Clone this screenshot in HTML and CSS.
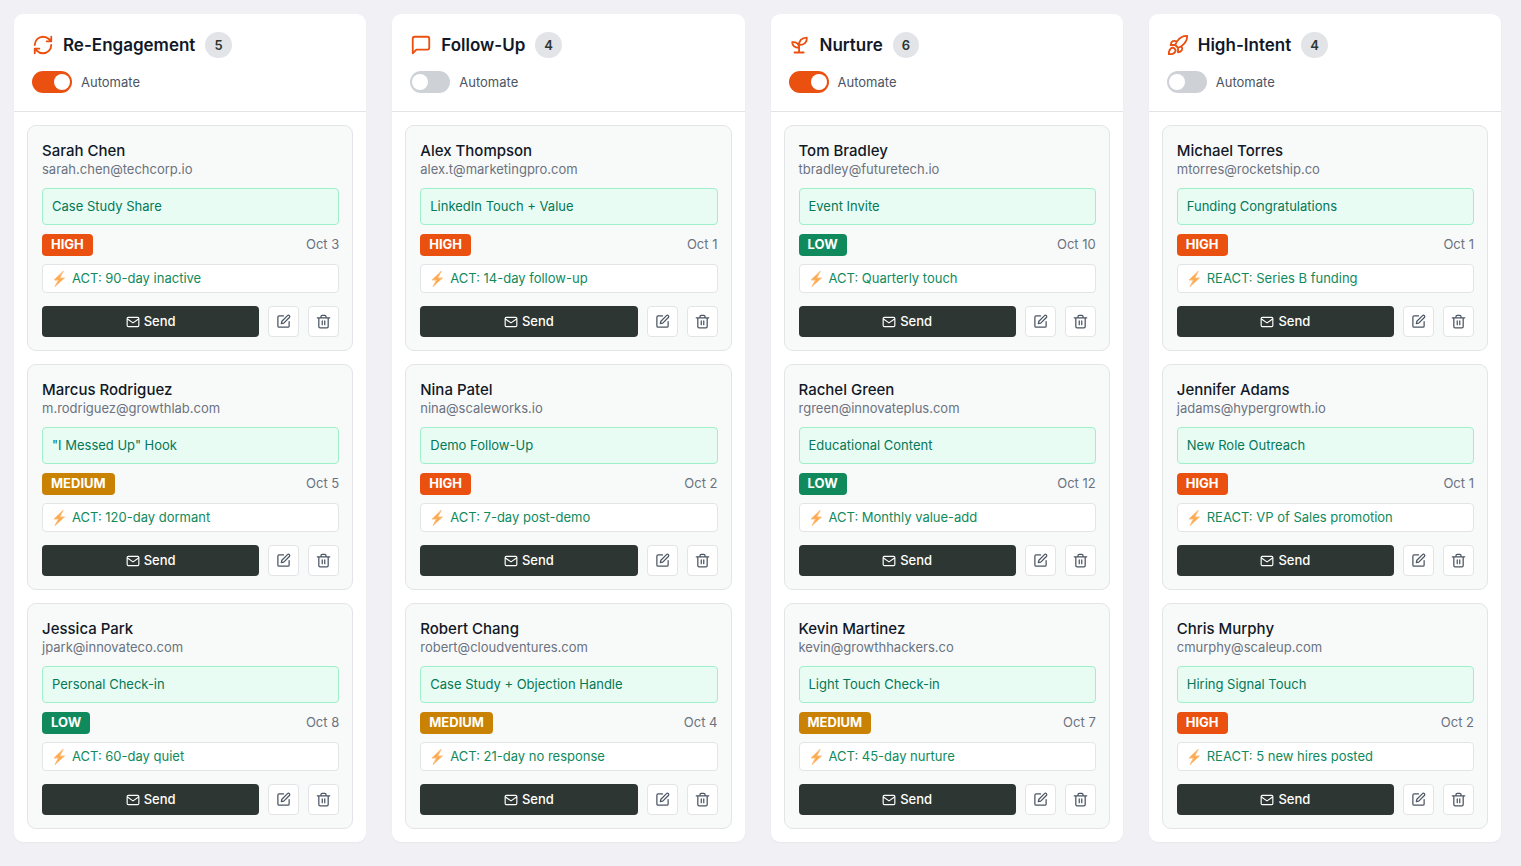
FILE: index.html
```
<!DOCTYPE html>
<html lang="en">
<head>
<meta charset="utf-8">
<meta name="viewport" content="width=device-width, initial-scale=1">
<title>Outreach board</title>
<link rel="stylesheet" href="styles.css">
</head>
<body>
<svg class="sprite" aria-hidden="true">
  <symbol id="i-refresh" viewBox="0 0 24 24"><path d="M3 12a9 9 0 0 1 9-9 9.750 9.750 0 0 1 6.740 2.740L21 8M21 3v5h-5M21 12a9 9 0 0 1-9 9 9.750 9.750 0 0 1-6.740-2.740L3 16M8 16H3v5"/></symbol>
  <symbol id="i-message" viewBox="0 0 24 24"><path d="M21 15a2 2 0 0 1-2 2H7l-4 4V5a2 2 0 0 1 2-2h14a2 2 0 0 1 2 2z"/></symbol>
  <symbol id="i-sprout" viewBox="0 0 24 24"><path d="M6 20.200h10M11 20v-8c0-3 .5-7.600 8.400-8 .5 4.500-2 8-8.400 8M11 15c-4 0-7.300-2-7.500-6 4.300-.5 7.500 1.500 7.500 6"/></symbol>
  <symbol id="i-rocket" viewBox="0 0 24 24"><path d="M2 22c0-3 .5-5 2-6a3 3 0 0 1 4.300 4.300C7.300 21.600 5 22 2 22zM12 15l-3-3a22 22 0 0 1 2-3.950A12.880 12.880 0 0 1 22 2c0 2.720-.780 7.500-6 11a22.350 22.350 0 0 1-4 2zM9 12H4s.550-3.030 2-4c1.620-1.080 5 0 5 0M12 15v5s3.030-.550 4-2c1.080-1.620 0-5 0-5"/></symbol>
  <symbol id="i-bolt" viewBox="0 0 16 16"><path d="M12 .5L3 9h4.500L4 15.500 13.500 7H9z" fill="#fba94c" stroke="#fdbe7c" stroke-width="1"/></symbol>
  <symbol id="i-mail" viewBox="0 0 24 24"><rect x="2" y="4" width="20" height="16" rx="2"/><path d="M2.500 7 12 13.500 21.500 7"/></symbol>
  <symbol id="i-edit" viewBox="0 0 24 24"><path d="M12 3H5a2 2 0 0 0-2 2v14a2 2 0 0 0 2 2h14a2 2 0 0 0 2-2v-7"/><path d="M18.400 2.600a2.120 2.120 0 0 1 3 3L12.400 14.600 8.500 15.500l.900-3.900z"/></symbol>
  <symbol id="i-trash" viewBox="0 0 24 24"><path d="M2 6h20M19.500 6v14a2 2 0 0 1-2 2h-11a2 2 0 0 1-2-2V6M8 6V4a2 2 0 0 1 2-2h4a2 2 0 0 1 2 2v2M10 11v6M14 11v6"/></symbol>
</svg>
<main class="board">
  <section class="column">
    <header class="column-head">
      <div class="title-row"><svg class="icon"><use href="#i-refresh"/></svg><h2>Re-Engagement</h2><span class="count">5</span></div>
      <label class="automate"><input type="checkbox" role="switch" checked><span>Automate</span></label>
    </header>
    <div class="cards">
      <article class="card">
        <h3>Sarah Chen</h3><p class="email">sarah.chen@techcorp.io</p>
        <p class="template">Case Study Share</p>
        <div class="meta"><span class="tag high">HIGH</span><time>Oct 3</time></div>
        <p class="trigger"><svg><use href="#i-bolt"/></svg>ACT: 90-day inactive</p>
        <div class="actions"><button class="send" type="button"><svg><use href="#i-mail"/></svg>Send</button><button class="tool" type="button" aria-label="Edit"><svg><use href="#i-edit"/></svg></button><button class="tool" type="button" aria-label="Delete"><svg><use href="#i-trash"/></svg></button></div>
      </article>
      <article class="card">
        <h3>Marcus Rodriguez</h3><p class="email">m.rodriguez@growthlab.com</p>
        <p class="template">"I Messed Up" Hook</p>
        <div class="meta"><span class="tag medium">MEDIUM</span><time>Oct 5</time></div>
        <p class="trigger"><svg><use href="#i-bolt"/></svg>ACT: 120-day dormant</p>
        <div class="actions"><button class="send" type="button"><svg><use href="#i-mail"/></svg>Send</button><button class="tool" type="button" aria-label="Edit"><svg><use href="#i-edit"/></svg></button><button class="tool" type="button" aria-label="Delete"><svg><use href="#i-trash"/></svg></button></div>
      </article>
      <article class="card">
        <h3>Jessica Park</h3><p class="email">jpark@innovateco.com</p>
        <p class="template">Personal Check-in</p>
        <div class="meta"><span class="tag low">LOW</span><time>Oct 8</time></div>
        <p class="trigger"><svg><use href="#i-bolt"/></svg>ACT: 60-day quiet</p>
        <div class="actions"><button class="send" type="button"><svg><use href="#i-mail"/></svg>Send</button><button class="tool" type="button" aria-label="Edit"><svg><use href="#i-edit"/></svg></button><button class="tool" type="button" aria-label="Delete"><svg><use href="#i-trash"/></svg></button></div>
      </article>
    </div>
  </section>
  <section class="column">
    <header class="column-head">
      <div class="title-row"><svg class="icon"><use href="#i-message"/></svg><h2>Follow-Up</h2><span class="count">4</span></div>
      <label class="automate"><input type="checkbox" role="switch"><span>Automate</span></label>
    </header>
    <div class="cards">
      <article class="card">
        <h3>Alex Thompson</h3><p class="email">alex.t@marketingpro.com</p>
        <p class="template">LinkedIn Touch + Value</p>
        <div class="meta"><span class="tag high">HIGH</span><time>Oct 1</time></div>
        <p class="trigger"><svg><use href="#i-bolt"/></svg>ACT: 14-day follow-up</p>
        <div class="actions"><button class="send" type="button"><svg><use href="#i-mail"/></svg>Send</button><button class="tool" type="button" aria-label="Edit"><svg><use href="#i-edit"/></svg></button><button class="tool" type="button" aria-label="Delete"><svg><use href="#i-trash"/></svg></button></div>
      </article>
      <article class="card">
        <h3>Nina Patel</h3><p class="email">nina@scaleworks.io</p>
        <p class="template">Demo Follow-Up</p>
        <div class="meta"><span class="tag high">HIGH</span><time>Oct 2</time></div>
        <p class="trigger"><svg><use href="#i-bolt"/></svg>ACT: 7-day post-demo</p>
        <div class="actions"><button class="send" type="button"><svg><use href="#i-mail"/></svg>Send</button><button class="tool" type="button" aria-label="Edit"><svg><use href="#i-edit"/></svg></button><button class="tool" type="button" aria-label="Delete"><svg><use href="#i-trash"/></svg></button></div>
      </article>
      <article class="card">
        <h3>Robert Chang</h3><p class="email">robert@cloudventures.com</p>
        <p class="template">Case Study + Objection Handle</p>
        <div class="meta"><span class="tag medium">MEDIUM</span><time>Oct 4</time></div>
        <p class="trigger"><svg><use href="#i-bolt"/></svg>ACT: 21-day no response</p>
        <div class="actions"><button class="send" type="button"><svg><use href="#i-mail"/></svg>Send</button><button class="tool" type="button" aria-label="Edit"><svg><use href="#i-edit"/></svg></button><button class="tool" type="button" aria-label="Delete"><svg><use href="#i-trash"/></svg></button></div>
      </article>
    </div>
  </section>
  <section class="column">
    <header class="column-head">
      <div class="title-row"><svg class="icon"><use href="#i-sprout"/></svg><h2>Nurture</h2><span class="count">6</span></div>
      <label class="automate"><input type="checkbox" role="switch" checked><span>Automate</span></label>
    </header>
    <div class="cards">
      <article class="card">
        <h3>Tom Bradley</h3><p class="email">tbradley@futuretech.io</p>
        <p class="template">Event Invite</p>
        <div class="meta"><span class="tag low">LOW</span><time>Oct 10</time></div>
        <p class="trigger"><svg><use href="#i-bolt"/></svg>ACT: Quarterly touch</p>
        <div class="actions"><button class="send" type="button"><svg><use href="#i-mail"/></svg>Send</button><button class="tool" type="button" aria-label="Edit"><svg><use href="#i-edit"/></svg></button><button class="tool" type="button" aria-label="Delete"><svg><use href="#i-trash"/></svg></button></div>
      </article>
      <article class="card">
        <h3>Rachel Green</h3><p class="email">rgreen@innovateplus.com</p>
        <p class="template">Educational Content</p>
        <div class="meta"><span class="tag low">LOW</span><time>Oct 12</time></div>
        <p class="trigger"><svg><use href="#i-bolt"/></svg>ACT: Monthly value-add</p>
        <div class="actions"><button class="send" type="button"><svg><use href="#i-mail"/></svg>Send</button><button class="tool" type="button" aria-label="Edit"><svg><use href="#i-edit"/></svg></button><button class="tool" type="button" aria-label="Delete"><svg><use href="#i-trash"/></svg></button></div>
      </article>
      <article class="card">
        <h3>Kevin Martinez</h3><p class="email">kevin@growthhackers.co</p>
        <p class="template">Light Touch Check-in</p>
        <div class="meta"><span class="tag medium">MEDIUM</span><time>Oct 7</time></div>
        <p class="trigger"><svg><use href="#i-bolt"/></svg>ACT: 45-day nurture</p>
        <div class="actions"><button class="send" type="button"><svg><use href="#i-mail"/></svg>Send</button><button class="tool" type="button" aria-label="Edit"><svg><use href="#i-edit"/></svg></button><button class="tool" type="button" aria-label="Delete"><svg><use href="#i-trash"/></svg></button></div>
      </article>
    </div>
  </section>
  <section class="column">
    <header class="column-head">
      <div class="title-row"><svg class="icon"><use href="#i-rocket"/></svg><h2>High-Intent</h2><span class="count">4</span></div>
      <label class="automate"><input type="checkbox" role="switch"><span>Automate</span></label>
    </header>
    <div class="cards">
      <article class="card">
        <h3>Michael Torres</h3><p class="email">mtorres@rocketship.co</p>
        <p class="template">Funding Congratulations</p>
        <div class="meta"><span class="tag high">HIGH</span><time>Oct 1</time></div>
        <p class="trigger"><svg><use href="#i-bolt"/></svg>REACT: Series B funding</p>
        <div class="actions"><button class="send" type="button"><svg><use href="#i-mail"/></svg>Send</button><button class="tool" type="button" aria-label="Edit"><svg><use href="#i-edit"/></svg></button><button class="tool" type="button" aria-label="Delete"><svg><use href="#i-trash"/></svg></button></div>
      </article>
      <article class="card">
        <h3>Jennifer Adams</h3><p class="email">jadams@hypergrowth.io</p>
        <p class="template">New Role Outreach</p>
        <div class="meta"><span class="tag high">HIGH</span><time>Oct 1</time></div>
        <p class="trigger"><svg><use href="#i-bolt"/></svg>REACT: VP of Sales promotion</p>
        <div class="actions"><button class="send" type="button"><svg><use href="#i-mail"/></svg>Send</button><button class="tool" type="button" aria-label="Edit"><svg><use href="#i-edit"/></svg></button><button class="tool" type="button" aria-label="Delete"><svg><use href="#i-trash"/></svg></button></div>
      </article>
      <article class="card">
        <h3>Chris Murphy</h3><p class="email">cmurphy@scaleup.com</p>
        <p class="template">Hiring Signal Touch</p>
        <div class="meta"><span class="tag high">HIGH</span><time>Oct 2</time></div>
        <p class="trigger"><svg><use href="#i-bolt"/></svg>REACT: 5 new hires posted</p>
        <div class="actions"><button class="send" type="button"><svg><use href="#i-mail"/></svg>Send</button><button class="tool" type="button" aria-label="Edit"><svg><use href="#i-edit"/></svg></button><button class="tool" type="button" aria-label="Delete"><svg><use href="#i-trash"/></svg></button></div>
      </article>
    </div>
  </section>
</main>
</body>
</html>
```
FILE: styles.css
```
* { box-sizing: border-box; }
body {
  margin: 0;
  background: #f0f0f5;
  color: #111827;
  font: 13px/19px Inter, "Liberation Sans", sans-serif;
}
h2, h3, p { margin: 0; }
.sprite { position: absolute; width: 0; height: 0; }
svg {
  flex: none;
  fill: none;
  stroke: currentColor;
  stroke-width: 2;
  stroke-linecap: round;
  stroke-linejoin: round;
}
.board {
  display: grid;
  grid-template-columns: repeat(4, minmax(0, 1fr));
  gap: 26px;
  padding: 14px 20px 24px 14px;
}
.column {
  background: #fff;
  border-radius: 9px;
  box-shadow: 0 1px 2px rgba(0, 0, 0, 0.04);
}
.column-head {
  display: flex;
  flex-direction: column;
  gap: 13px;
  padding: 18px;
  border-bottom: 1px solid #e2e4e8;
}
.title-row { display: flex; align-items: center; gap: 9px; }
.icon { width: 22px; height: 22px; color: #ea5010; }
h2 { padding-right: 1px; font-size: 17px; line-height: 26px; font-weight: 600; }
.count {
  min-width: 26px;
  padding: 0 9px;
  border-radius: 13px;
  background: #e2e4e8;
  color: #2d3632;
  font-size: 13px;
  line-height: 26px;
  font-weight: 600;
  text-align: center;
}
.automate {
  display: flex;
  align-items: center;
  align-self: flex-start;
  gap: 9px;
  height: 22px;
  color: #4b5563;
}
.automate input {
  appearance: none;
  display: flex;
  align-items: center;
  width: 40px;
  height: 22px;
  margin: 0;
  padding: 0 2px;
  border-radius: 11px;
  background: #ced2d6;
}
.automate input::before {
  content: "";
  width: 16px;
  height: 16px;
  border-radius: 50%;
  background: #fff;
}
.automate input:checked { justify-content: flex-end; background: #ea5010; }
.cards { display: flex; flex-direction: column; gap: 13px; padding: 13px; }
.card {
  padding: 14px 13px 13px 14px;
  border: 1px solid #e2e4e8;
  border-radius: 9px;
  background: #f8faf9;
}
h3 { font-size: 15px; line-height: 22px; font-weight: 500; }
.email { color: #6b7280; line-height: 15px; }
.template {
  margin-top: 11px;
  padding: 8px 9px;
  border: 1px solid #a0efcb;
  border-radius: 4px;
  background: #e8fcf4;
  color: #047857;
}
.meta {
  display: flex;
  align-items: center;
  justify-content: space-between;
  margin: 9px 0 8px;
  color: #6b7280;
}
.meta time { padding: 1px 0 2px; }
.tag {
  padding: 1px 9px 2px;
  border-radius: 4px;
  color: #fff;
  font-weight: 700;
}
.high { background: #ea5010; }
.medium { background: #ca8204; }
.low { background: #108a5c; }
.trigger {
  display: flex;
  align-items: center;
  gap: 5px;
  padding: 4px 8px;
  border: 1px solid #e2e4e8;
  border-radius: 4px;
  background: #fff;
  color: #108a5c;
}
.trigger svg { width: 16px; height: 16px; }
.actions { display: flex; gap: 9px; margin-top: 13px; }
button {
  display: flex;
  align-items: center;
  justify-content: center;
  height: 31px;
  margin: 0;
  padding: 0;
  border-radius: 4px;
  font: inherit;
}
.send {
  flex: 1;
  gap: 4px;
  border: 0;
  background: #2d3632;
  color: #fff;
  font-weight: 500;
}
.send svg { width: 14px; height: 14px; }
.tool {
  width: 31px;
  border: 1px solid #e2e4e8;
  background: #fff;
  color: #4b5563;
}
.tool svg { width: 15px; height: 15px; }
```
